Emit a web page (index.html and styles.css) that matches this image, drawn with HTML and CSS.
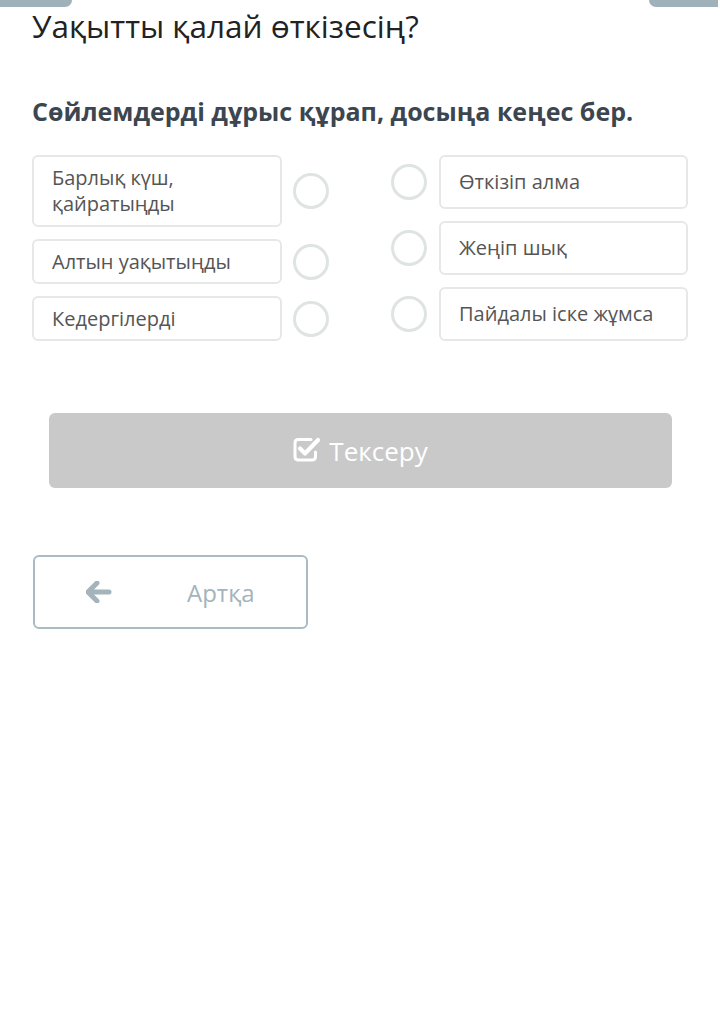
FILE: index.html
```html
<!DOCTYPE html>
<html>
<head>
    <title>Уақытты қалай өткізесің?</title>
    <meta charset="UTF-8">
    <link rel="stylesheet" href="styles.css">
</head>
<body>
    <div class="top-tabs">
        <div class="tab tab-left"></div>
        <div class="tab tab-right"></div>
    </div>

    <div class="page">
        <h1 class="title">Уақытты қалай өткізесің?</h1>
        <h2 class="task">Сөйлемдерді дұрыс құрап, досыңа кеңес бер.</h2>

        <!-- Matching columns -->
        <div class="match">
            <div class="column column-left">
                <div class="row">
                    <div class="card card-tall">Барлық күш, қайратыңды</div>
                    <span class="dot"></span>
                </div>
                <div class="row">
                    <div class="card">Алтын уақытыңды</div>
                    <span class="dot"></span>
                </div>
                <div class="row">
                    <div class="card">Кедергілерді</div>
                    <span class="dot"></span>
                </div>
            </div>
            <div class="column column-right">
                <div class="row">
                    <span class="dot"></span>
                    <div class="card">Өткізіп алма</div>
                </div>
                <div class="row">
                    <span class="dot"></span>
                    <div class="card">Жеңіп шық</div>
                </div>
                <div class="row">
                    <span class="dot"></span>
                    <div class="card">Пайдалы іске жұмса</div>
                </div>
            </div>
        </div>

        <button class="check-button" disabled>
            <svg class="check-icon" width="28" height="26" viewBox="0 0 28 26">
                <path d="M18 3.5 H5.5 Q2 3.5 2 7 V20.5 Q2 24 5.5 24 H19 Q22.5 24 22.5 20.5 V16" fill="none" stroke="#fff" stroke-width="3" stroke-linecap="round"/>
                <path d="M7 12.5 L12 17.5 L25 4" fill="none" stroke="#fff" stroke-width="4.2" stroke-linecap="round" stroke-linejoin="round"/>
            </svg>
            <span>Тексеру</span>
        </button>

        <button class="back-button">
            <svg class="back-icon" width="26" height="22" viewBox="0 0 26 22">
                <path d="M11 2 L2 11 L11 20 M3 11 H23" fill="none" stroke="#a3b4bc" stroke-width="5" stroke-linecap="round" stroke-linejoin="round"/>
            </svg>
            <span class="back-label">Артқа</span>
        </button>
    </div>
</body>
</html>
```

FILE: styles.css
```css
body {
    margin: 0;
    font-family: "Open Sans", "DejaVu Sans", sans-serif;
    background: #fff;
    color: #333;
}
.top-tabs {
    display: flex;
    justify-content: space-between;
    height: 7px;
}
.tab {
    height: 7px;
    background: #9fb2ba;
}
.tab-left {
    width: 72px;
    border-radius: 0 0 8px 0;
}
.tab-right {
    width: 69px;
    margin-right: 2px;
    border-radius: 0 0 0 8px;
}
.page {
    padding: 0 32px;
}
.title {
    margin: 0;
    font-size: 31.5px;
    font-weight: normal;
    line-height: 38px;
    color: #222;
}
.task {
    margin: 50px 0 0;
    font-size: 25px;
    font-weight: bold;
    line-height: 32px;
    color: #3c4650;
}
.match {
    display: flex;
    justify-content: space-between;
    margin-top: 28px;
}
.column {
    display: flex;
    flex-direction: column;
    gap: 12px;
}
.row {
    display: flex;
    align-items: center;
}
.card {
    box-sizing: border-box;
    display: flex;
    align-items: center;
    width: 250px;
    height: 45px;
    border: 2px solid #e6e8e8;
    border-radius: 6px;
    padding: 0 18px;
    font-size: 20px;
    line-height: 26px;
    color: #555;
}
.card-tall {
    height: 72px;
}
.column-left .card {
    margin-right: 11px;
}
.column-right .card {
    width: 249px;
    height: 54px;
    margin-left: 12px;
}
.dot {
    box-sizing: border-box;
    width: 36px;
    height: 36px;
    border: 3px solid #dfe3e4;
    border-radius: 50%;
}
.check-button {
    display: flex;
    align-items: center;
    justify-content: center;
    gap: 8px;
    width: 623px;
    height: 75px;
    margin: 72px 0 0 17px;
    border: none;
    border-radius: 6px;
    background: #c9c9c9;
    color: #fff;
    font-family: "Open Sans", sans-serif;
    font-size: 26px;
}
.check-icon {
    margin-top: -3px;
}
.back-button {
    display: flex;
    align-items: center;
    width: 275px;
    height: 74px;
    margin-top: 67px;
    margin-left: 1px;
    padding: 0 0 0 51px;
    border: 2px solid #a9bcc4;
    border-radius: 6px;
    background: #fff;
    color: #a3b4bc;
    font-family: "Open Sans", sans-serif;
    font-size: 24px;
}
.back-label {
    margin-left: 75px;
}
```
